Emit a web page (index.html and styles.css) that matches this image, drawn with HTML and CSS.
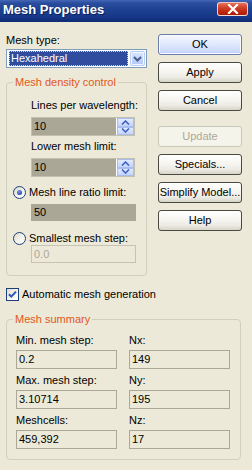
FILE: index.html
```html
<!DOCTYPE html>
<html>
<head>
<meta charset="utf-8">
<title>Mesh Properties</title>
<link rel="stylesheet" href="styles.css">
</head>
<body>
<div class="window">
  <div class="titlebar">
    <span class="title">Mesh Properties</span>
    <span class="close"><svg width="12" height="10" viewBox="0 0 12 10"><path d="M2 1 L10 9 M10 1 L2 9" stroke="#fff" stroke-width="2.2" stroke-linecap="square"/></svg></span>
  </div>
  <div class="client">
    <div class="top">
      <div class="left">
        <div class="label">Mesh type:</div>
        <div class="combo">
          <div class="sel-wrap"><div class="sel">Hexahedral</div></div>
          <div class="combo-btn"><svg width="13" height="15" viewBox="0 0 13 15"><path d="M3 6 L6.5 9.5 L10 6" fill="none" stroke="#4A5F8E" stroke-width="2"/></svg></div>
        </div>
        <fieldset class="group g1">
          <legend>Mesh density control</legend>
          <div class="label ind">Lines per wavelength:</div>
          <div class="spin ind">
            <span class="val">10</span>
            <div class="spin-btns">
              <div class="sb"><svg width="9" height="5" viewBox="0 0 9 5"><path d="M1 4.5 L4.5 1 L8 4.5" fill="none" stroke="#3E62C0" stroke-width="1.6"/></svg></div>
              <div class="sb"><svg width="9" height="5" viewBox="0 0 9 5"><path d="M1 0.5 L4.5 4 L8 0.5" fill="none" stroke="#3E62C0" stroke-width="1.6"/></svg></div>
            </div>
          </div>
          <div class="label ind lbl2">Lower mesh limit:</div>
          <div class="spin ind">
            <span class="val">10</span>
            <div class="spin-btns">
              <div class="sb"><svg width="9" height="5" viewBox="0 0 9 5"><path d="M1 4.5 L4.5 1 L8 4.5" fill="none" stroke="#3E62C0" stroke-width="1.6"/></svg></div>
              <div class="sb"><svg width="9" height="5" viewBox="0 0 9 5"><path d="M1 0.5 L4.5 4 L8 0.5" fill="none" stroke="#3E62C0" stroke-width="1.6"/></svg></div>
            </div>
          </div>
          <div class="radio-row r1"><span class="radio on"></span><span class="rlabel">Mesh line ratio limit:</span></div>
          <div class="edit gray ind">50</div>
          <div class="radio-row r2"><span class="radio"></span><span class="rlabel">Smallest mesh step:</span></div>
          <div class="edit disabled ind">0.0</div>
        </fieldset>
      </div>
      <div class="buttons">
        <div class="btn default">OK</div>
        <div class="btn">Apply</div>
        <div class="btn">Cancel</div>
        <div class="btn disabled sep">Update</div>
        <div class="btn">Specials...</div>
        <div class="btn">Simplify Model...</div>
        <div class="btn">Help</div>
      </div>
    </div>
    <div class="check-row">
      <span class="check"><svg width="11" height="11" viewBox="0 0 11 11"><path d="M2 5.2 L4.3 7.6 L9 2.6" fill="none" stroke="#2B55B8" stroke-width="2"/></svg></span>
      <span>Automatic mesh generation</span>
    </div>
    <fieldset class="group g2">
      <legend>Mesh summary</legend>
      <div class="summary">
        <div class="slabel">Min. mesh step:</div>
        <div class="slabel">Nx:</div>
        <div class="sfield">0.2</div>
        <div class="sfield">149</div>
        <div class="slabel">Max. mesh step:</div>
        <div class="slabel">Ny:</div>
        <div class="sfield">3.10714</div>
        <div class="sfield">195</div>
        <div class="slabel">Meshcells:</div>
        <div class="slabel">Nz:</div>
        <div class="sfield">459,392</div>
        <div class="sfield">17</div>
      </div>
    </fieldset>
  </div>
</div>
</body>
</html>
```
FILE: styles.css
```css
* { box-sizing: border-box; }
html, body { margin: 0; padding: 0; }
body {
  width: 252px;
  height: 470px;
  overflow: hidden;
  background: #ECE9D8;
  font-family: "Liberation Sans", Arial, sans-serif;
  font-size: 11px;
  line-height: 13px;
  color: #000;
}
.window {
  width: 252px;
  height: 470px;
  display: flex;
  flex-direction: column;
  background: #ECE9D8;
}
.titlebar {
  height: 22px;
  flex: none;
  display: flex;
  align-items: flex-start;
  justify-content: space-between;
  padding: 2px 4px 0 3px;
  background: linear-gradient(to bottom, #4468B6 0%, #2B4D9E 14%, #1E418F 45%, #173888 75%, #0E2B72 100%);
}
.title {
  font-weight: bold;
  font-size: 13px;
  line-height: 16px;
  color: #fff;
  text-shadow: 1px 1px 0 #0B1F5E;
}
.close {
  width: 31px;
  height: 14px;
  border-radius: 3px;
  border: 1px solid rgba(255,255,255,0.75);
  background: linear-gradient(to bottom, #E5735C 0%, #D4442C 35%, #C0280F 70%, #AA1C08 100%);
  display: flex;
  align-items: center;
  justify-content: center;
}
.client {
  padding: 12px 10px 0 6px;
}
.top {
  display: flex;
  align-items: flex-start;
}
.left {
  width: 141px;
  flex: none;
}
.label { height: 13px; white-space: nowrap; }
.ind { margin-left: 18px; }
.combo {
  margin-top: 2px;
  height: 19px;
  border: 1px solid #7F9DB9;
  background: #fff;
  display: flex;
  align-items: stretch;
  padding: 1px;
}
.sel-wrap {
  flex: 1;
  margin: 0 2px 0 1px;
  background: #1A1A1A;
  display: flex;
}
.sel {
  flex: 1;
  border: 1px dotted #E6D77C;
  background: #2F4C9E;
  color: #fff;
  padding-left: 1px;
  line-height: 13px;
}
.combo-btn {
  width: 15px;
  flex: none;
  border: 1px solid #B9CCF6;
  border-radius: 2px;
  background: linear-gradient(to bottom, #DDE8FD 0%, #C4D5FB 50%, #B4C8F6 100%);
  box-shadow: inset 0 0 0 1px #F2F6FF;
  display: flex;
  align-items: center;
  justify-content: center;
}
.group {
  margin: 0;
  border: 1px solid #D0D0BF;
  border-radius: 4px;
  min-width: 0;
}
.group legend {
  color: #E1581A;
  padding: 0 2px;
  line-height: 13px;
}
.g1 {
  margin-top: 8px;
  padding: 10px 11px 12px 6px;
}
.lbl2 { margin-top: 4px; }
.spin {
  margin-top: 5px;
  width: 104px;
  height: 19px;
  border: 1px solid #C3C0B0;
  background: #ABA797;
  display: flex;
  align-items: stretch;
}
.spin .val {
  flex: 1;
  padding-left: 2px;
  line-height: 17px;
}
.spin-btns {
  width: 18px;
  flex: none;
  display: flex;
  flex-direction: column;
  background: #fff;
  padding: 0 0 0 1px;
}
.sb {
  flex: 1;
  border: 1px solid #A9BDEE;
  background: linear-gradient(to bottom, #E2EBFE, #C3D3FA);
  display: flex;
  align-items: center;
  justify-content: center;
}
.radio-row {
  height: 13px;
  display: flex;
  align-items: center;
  white-space: nowrap;
}
.r1 { margin-top: 9px; }
.r2 { margin-top: 11px; }
.radio {
  width: 13px;
  height: 13px;
  flex: none;
  border-radius: 50%;
  border: 1px solid #1E3F77;
  background: linear-gradient(135deg, #D9D7CC 0%, #F2F1EA 50%, #FFFFFF 100%);
  display: flex;
  align-items: center;
  justify-content: center;
}
.radio.on::after {
  content: "";
  width: 5px;
  height: 5px;
  border-radius: 50%;
  background: radial-gradient(circle at 40% 35%, #7E9BE6 0%, #2F57BC 60%, #1D43A6 100%);
}
.rlabel { margin-left: 3px; }
.edit {
  width: 105px;
  padding-left: 3px;
}
.edit.gray {
  margin-top: 5px;
  height: 17px;
  line-height: 17px;
  background: #ABA797;
}
.edit.disabled {
  height: 18px;
  line-height: 16px;
  border: 1px solid #C6C3B4;
  color: #ACA899;
  padding-left: 2px;
}
.buttons {
  margin-left: 11px;
  width: 84px;
  flex: none;
  display: flex;
  flex-direction: column;
}
.btn {
  height: 21px;
  border: 1px solid #4A4A44;
  border-radius: 3px;
  background: linear-gradient(to bottom, #FFFFFF 0%, #F6F5F0 45%, #ECEBE4 75%, #D8D4C8 100%);
  text-align: center;
  line-height: 19px;
  white-space: nowrap;
}
.btn + .btn { margin-top: 7px; }
.btn.sep { margin-top: 15px; }
.btn.default {
  border-color: #6A7DAA;
  background: linear-gradient(to bottom, #F4F7FF 0%, #E2EAFD 45%, #CFDCFA 80%, #BCCDF3 100%);
  box-shadow: inset 0 0 0 1px #F8FAFF;
}
.btn.disabled {
  border-color: #C9C7BA;
  background: #F5F4EA;
  color: #ACA899;
}
.check-row {
  margin-top: 12px;
  height: 13px;
  display: flex;
  align-items: center;
  white-space: nowrap;
}
.check {
  width: 13px;
  height: 13px;
  flex: none;
  border: 1px solid #1E3F77;
  background: linear-gradient(135deg, #DCDAD0 0%, #F4F3EE 55%, #FFFFFF 100%);
  display: flex;
  align-items: center;
  justify-content: center;
  margin-right: 3px;
}
.g2 {
  margin-top: 12px;
  width: 235px;
  padding: 8px 10px 10px 9px;
}
.g2 legend { margin-left: -3px; }
.summary {
  display: grid;
  grid-template-columns: 101px 101px;
  column-gap: 12px;
}
.slabel {
  height: 13px;
  margin-bottom: 3px;
  white-space: nowrap;
}
.sfield {
  height: 19px;
  margin-bottom: 5px;
  border: 1px solid #ABA899;
  padding-left: 2px;
  line-height: 17px;
}
.summary .sfield:nth-last-child(-n+2) { margin-bottom: 0; }
```
